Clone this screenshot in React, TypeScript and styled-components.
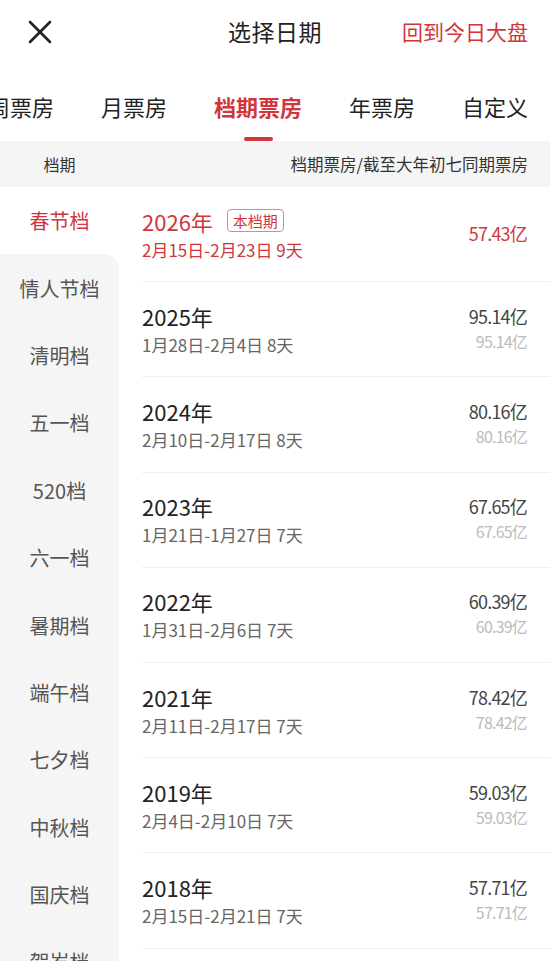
import React, { useState } from "react";
import styled, { createGlobalStyle } from "styled-components";

const RED = "#d0363c";

const GlobalStyle = createGlobalStyle`
  html, body {
    margin: 0;
    padding: 0;
    background: #fff;
  }
  body {
    font-family: "Noto Sans CJK SC", "Noto Sans", sans-serif;
    color: #222;
  }
  * {
    box-sizing: border-box;
  }
`;

const Page = styled.div`
  width: 550px;
  height: 961px;
  overflow: hidden;
  background: #fff;
`;

const TopBar = styled.div`
  height: 64px;
  display: grid;
  grid-template-columns: 1fr auto 1fr;
  align-items: center;
`;

const CloseButton = styled.button`
  justify-self: start;
  margin-left: 26px;
  width: 28px;
  height: 28px;
  padding: 0;
  border: 0;
  background: none;
  display: flex;
  align-items: center;
  justify-content: center;
`;

const Title = styled.div`
  font-size: 23px;
  line-height: 30px;
  margin-top: -2px;
  color: #222;
  letter-spacing: 0.5px;
`;

const TodayLink = styled.div`
  justify-self: end;
  margin-right: 22px;
  margin-top: -2px;
  font-size: 21px;
  color: ${RED};
`;

const TabBar = styled.div`
  height: 77px;
  display: flex;
  justify-content: flex-end;
  align-items: stretch;
  gap: 47px;
  padding-right: 22px;
  overflow: hidden;
  white-space: nowrap;
`;

const Tab = styled.div<{ $active?: boolean }>`
  position: relative;
  flex-shrink: 0;
  padding-top: 27px;
  font-size: 22px;
  font-weight: ${(p) => (p.$active ? 700 : 400)};
  color: ${(p) => (p.$active ? RED : "#222")};
  line-height: 30px;

  &::after {
    content: "";
    display: ${(p) => (p.$active ? "block" : "none")};
    position: absolute;
    left: 50%;
    bottom: 0;
    width: 29px;
    height: 4px;
    margin-left: -14px;
    border-radius: 2px;
    background: ${RED};
  }
`;

const ColumnHeader = styled.div`
  height: 46px;
  display: flex;
  align-items: center;
  justify-content: space-between;
  background: #f5f5f5;
  font-size: 16px;
  color: #333;
`;

const ColumnLabel = styled.div`
  width: 119px;
  text-align: center;
`;

const ColumnValue = styled.div`
  padding-right: 22px;
  font-size: 16.5px;
`;

const Body = styled.div`
  display: flex;
  align-items: flex-start;
`;

const Sidebar = styled.div`
  width: 119px;
  flex-shrink: 0;
  background: #fff;
`;

const SideItem = styled.div<{ $active?: boolean; $afterActive?: boolean }>`
  height: 67.4px;
  display: flex;
  align-items: center;
  justify-content: center;
  font-size: 20px;
  color: ${(p) => (p.$active ? RED : "#555")};
  background: ${(p) => (p.$active ? "#fff" : "#f5f5f5")};
  border-top-right-radius: ${(p) => (p.$afterActive ? "15px" : "0")};
`;

const List = styled.div`
  flex: 1;
  padding-left: 23px;
`;

const Row = styled.div`
  height: 95.2px;
  display: flex;
  align-items: center;
  justify-content: space-between;
  padding-right: 23px;
  border-bottom: 1px solid #efefef;
`;

const RowMain = styled.div`
  display: flex;
  flex-direction: column;
  gap: 5px;
`;

const YearLine = styled.div`
  display: flex;
  align-items: center;
  gap: 14px;
`;

const Year = styled.div<{ $active?: boolean }>`
  font-size: 22px;
  line-height: 26px;
  color: ${(p) => (p.$active ? RED : "#222")};
`;

const Badge = styled.span`
  font-size: 15px;
  line-height: 21px;
  padding: 0 5px;
  color: ${RED};
  border: 1px solid #d8898c;
  border-radius: 4px;
`;

const Dates = styled.div<{ $active?: boolean }>`
  font-size: 17px;
  line-height: 22px;
  color: ${(p) => (p.$active ? RED : "#666")};
`;

const Values = styled.div`
  display: flex;
  flex-direction: column;
  align-items: flex-end;
  gap: 4px;
  margin-top: -3px;
`;

const Amount = styled.div<{ $active?: boolean }>`
  font-size: 18px;
  line-height: 22px;
  letter-spacing: -0.8px;
  color: ${(p) => (p.$active ? RED : "#444")};
`;

const SameTime = styled.div`
  font-size: 16px;
  line-height: 20px;
  letter-spacing: -0.8px;
  color: #bbb;
`;

const CloseIcon = () => (
  <svg width="26" height="26" viewBox="0 0 26 26">
    <path
      d="M3 3 L23 23 M23 3 L3 23"
      stroke="#222"
      strokeWidth="2.6"
      strokeLinecap="round"
      fill="none"
    />
  </svg>
);

const tabs = ["周票房", "月票房", "档期票房", "年票房", "自定义"];

const seasons = [
  "春节档",
  "情人节档",
  "清明档",
  "五一档",
  "520档",
  "六一档",
  "暑期档",
  "端午档",
  "七夕档",
  "中秋档",
  "国庆档",
  "贺岁档",
];

interface YearRow {
  year: string;
  dates: string;
  amount: string;
  same?: string;
  current?: boolean;
}

const rows: YearRow[] = [
  { year: "2026年", dates: "2月15日-2月23日 9天", amount: "57.43亿", current: true },
  { year: "2025年", dates: "1月28日-2月4日 8天", amount: "95.14亿", same: "95.14亿" },
  { year: "2024年", dates: "2月10日-2月17日 8天", amount: "80.16亿", same: "80.16亿" },
  { year: "2023年", dates: "1月21日-1月27日 7天", amount: "67.65亿", same: "67.65亿" },
  { year: "2022年", dates: "1月31日-2月6日 7天", amount: "60.39亿", same: "60.39亿" },
  { year: "2021年", dates: "2月11日-2月17日 7天", amount: "78.42亿", same: "78.42亿" },
  { year: "2019年", dates: "2月4日-2月10日 7天", amount: "59.03亿", same: "59.03亿" },
  { year: "2018年", dates: "2月15日-2月21日 7天", amount: "57.71亿", same: "57.71亿" },
  { year: "2017年", dates: "1月27日-2月2日 7天", amount: "33.68亿", same: "33.68亿" },
];

const App = () => {
  const [tab, setTab] = useState(2);
  const [season, setSeason] = useState(0);

  return (
    <Page>
      <GlobalStyle />
      <TopBar>
        <CloseButton aria-label="关闭">
          <CloseIcon />
        </CloseButton>
        <Title>选择日期</Title>
        <TodayLink>回到今日大盘</TodayLink>
      </TopBar>
      <TabBar>
        {tabs.map((t, i) => (
          <Tab key={t} $active={i === tab} onClick={() => setTab(i)}>
            {t}
          </Tab>
        ))}
      </TabBar>
      <ColumnHeader>
        <ColumnLabel>档期</ColumnLabel>
        <ColumnValue>档期票房/截至大年初七同期票房</ColumnValue>
      </ColumnHeader>
      <Body>
        <Sidebar>
          {seasons.map((s, i) => (
            <SideItem
              key={s}
              $active={i === season}
              $afterActive={i === season + 1}
              onClick={() => setSeason(i)}
            >
              {s}
            </SideItem>
          ))}
        </Sidebar>
        <List>
          {rows.map((r) => (
            <Row key={r.year}>
              <RowMain>
                <YearLine>
                  <Year $active={r.current}>{r.year}</Year>
                  {r.current && <Badge>本档期</Badge>}
                </YearLine>
                <Dates $active={r.current}>{r.dates}</Dates>
              </RowMain>
              <Values>
                <Amount $active={r.current}>{r.amount}</Amount>
                {r.same && <SameTime>{r.same}</SameTime>}
              </Values>
            </Row>
          ))}
        </List>
      </Body>
    </Page>
  );
};

export default App;
